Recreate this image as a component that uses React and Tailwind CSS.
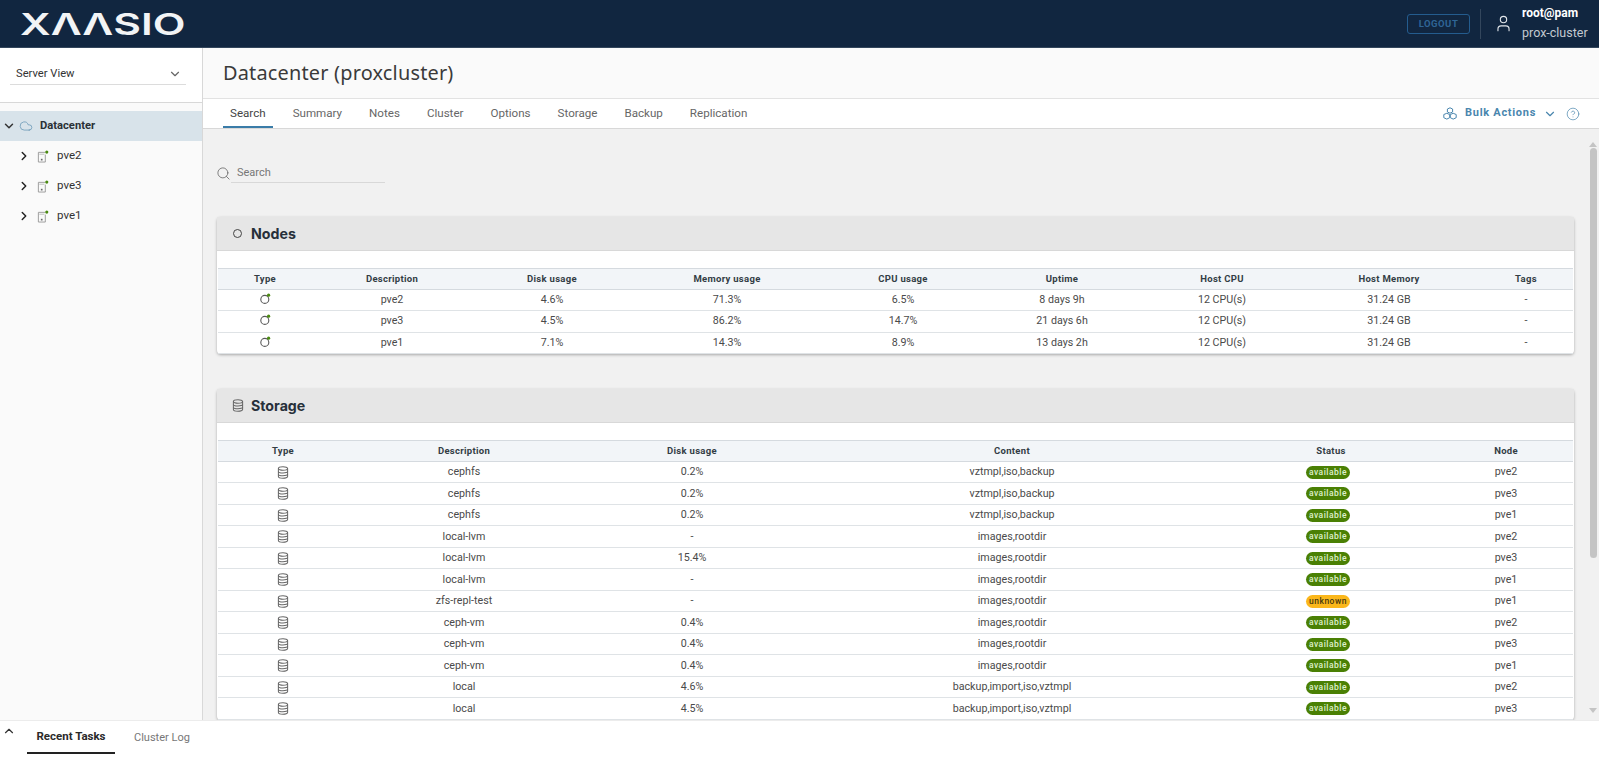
import React from "react";
import { ChevronDown, ChevronRight, ChevronUp, Search, User, CircleHelp, Cloud } from "lucide-react";

const nodeCols = "grid-cols-[94px_160px_160px_190px_162px_156px_164px_170px_96px]";
const storageCols = "grid-cols-[130px_232px_224px_416px_222px_128px]";

const nodes = [
  ["pve2", "4.6%", "71.3%", "6.5%", "8 days 9h", "12 CPU(s)", "31.24 GB", "-"],
  ["pve3", "4.5%", "86.2%", "14.7%", "21 days 6h", "12 CPU(s)", "31.24 GB", "-"],
  ["pve1", "7.1%", "14.3%", "8.9%", "13 days 2h", "12 CPU(s)", "31.24 GB", "-"],
];
const vz = "vztmpl,iso,backup";
const im = "images,rootdir";
const bk = "backup,import,iso,vztmpl";
const storage = [
  ["cephfs", "0.2%", vz, "available", "pve2"],
  ["cephfs", "0.2%", vz, "available", "pve3"],
  ["cephfs", "0.2%", vz, "available", "pve1"],
  ["local-lvm", "-", im, "available", "pve2"],
  ["local-lvm", "15.4%", im, "available", "pve3"],
  ["local-lvm", "-", im, "available", "pve1"],
  ["zfs-repl-test", "-", im, "unknown", "pve1"],
  ["ceph-vm", "0.4%", im, "available", "pve2"],
  ["ceph-vm", "0.4%", im, "available", "pve3"],
  ["ceph-vm", "0.4%", im, "available", "pve1"],
  ["local", "4.6%", bk, "available", "pve2"],
  ["local", "4.5%", bk, "available", "pve3"],
];
const tabs = ["Search", "Summary", "Notes", "Cluster", "Options", "Storage", "Backup", "Replication"];

function DbIcon({ className = "w-[12px] h-[13px]" }) {
  return (
    <svg viewBox="0 0 13 14" className={className} fill="none" stroke="#666" strokeWidth="1.1">
      <ellipse cx="6.5" cy="2.6" rx="5" ry="1.9" />
      <path d="M1.5 2.6v8.8c0 1 2.2 1.9 5 1.9s5-.9 5-1.9V2.6" />
      <path d="M1.5 5.8c0 1 2.2 1.7 5 1.7s5-.7 5-1.7M1.5 8.8c0 1 2.2 1.7 5 1.7s5-.7 5-1.7" />
    </svg>
  );
}
function NodeIcon() {
  return (
    <svg viewBox="0 0 13 13" className="w-[13px] h-[13px] -mt-[3px]" fill="none">
      <circle cx="5.8" cy="7.4" r="4" stroke="#5a5a5a" strokeWidth="1.1" />
      <circle cx="9.6" cy="3.2" r="1.6" fill="#4a8a10" />
    </svg>
  );
}
function HostIcon() {
  return (
    <svg viewBox="0 0 13 14" className="w-[12px] h-[13px]" fill="none">
      <path d="M9 2.5H1.5v10.5h7.5V5" stroke="#999" strokeWidth="1" />
      <rect x="2.5" y="4" width="5.5" height="1" fill="#bbb" />
      <rect x="4.2" y="9.5" width="1.8" height="1.8" fill="#666" />
      <circle cx="10.6" cy="2.2" r="1.7" fill="#4a8a10" />
    </svg>
  );
}
function BulkIcon() {
  return (
    <svg viewBox="0 0 14 13" className="w-[14px] h-[13px]" fill="none" stroke="#4a86ae" strokeWidth="1">
      <path d="M7 .8 9.6 2v3L7 6.2 4.4 5V2z" />
      <path d="M3.8 6.3 6.7 7.5v3.2l-2.9 1.4L.8 10.7V7.5z" />
      <path d="M10.2 6.3 13.2 7.5v3.2l-3 1.4-2.9-1.4V7.5z" />
    </svg>
  );
}
function Badge({ v }) {
  const c = v === "available" ? "bg-[#4a8004] text-[#dff0cc]" : "bg-[#fbb71b] text-[#4a3a10]";
  return (
    <span className={`${c} inline-flex items-center justify-center w-[44px] h-[13px] rounded-full text-[8.5px] leading-none font-medium tracking-[0.5px] relative -left-[3px]`}>
      {v}
    </span>
  );
}
function HeadCell({ children, className = "" }) {
  return <div className={`text-center text-[9.5px] font-bold tracking-[0.3px] text-[#333d45] ${className}`}>{children}</div>;
}
function Cell({ children, className = "" }) {
  return <div className={`flex items-center justify-center text-[10.7px] text-[#4a4a4a] ${className}`}>{children}</div>;
}
function Panel({ icon, title, cols, head, lastPad = "", children }) {
  return (
    <section className="rounded-sm bg-white shadow-[0_1px_3px_rgba(0,0,0,0.3)]">
      <div className="h-[34px] bg-[#e6e6e6] border-b border-[#d8d8d8] flex items-center pl-[14px] gap-[7px]">
        <div className="w-[13px] flex justify-center">{icon}</div>
        <h2 className="text-[14.2px] font-bold text-[#27303a] font-['Inter',sans-serif]">{title}</h2>
      </div>
      <div className="pt-[17px] pl-[1px] pr-[1px]">
        <div className={`grid ${cols} h-[22px] items-center bg-[#f2f5f8] border-t border-b border-[#d5dadf]`}>
          {head.map((h, i) => <HeadCell key={h} className={i === head.length - 1 ? lastPad : ""}>{h}</HeadCell>)}
        </div>
        {children}
      </div>
    </section>
  );
}

export default function App() {
  return (
    <div className="w-[1599px] h-[757px] flex flex-col overflow-hidden bg-white font-['Roboto',sans-serif]">
      <header className="h-[48px] shrink-0 bg-[#112640] border-b border-[#33465c] flex items-center pl-[20px]">
        <span className="inline-block origin-left scale-x-[1.42] text-[30px] leading-none font-semibold text-[#f2f4f6] font-['Inter',sans-serif]">XΛΛSIO</span>
        <div className="ml-auto flex items-center">
          <button className="w-[63px] h-[20px] rounded-[3px] border border-[#245c8e] text-[9.5px] pt-[1px] font-bold tracking-[0.5px] text-[#2f6596] flex items-center justify-center">LOGOUT</button>
          <div className="w-px h-[30px] bg-[#33465c] ml-[10px]" />
          <User className="w-[19px] h-[19px] text-[#e2e6ea] ml-[13px]" strokeWidth={1.4} />
          <div className="ml-[9px] w-[77px] flex flex-col -mt-[1px]">
            <span className="text-[12px] font-bold text-white leading-[20px]">root@pam</span>
            <span className="text-[12.5px] text-[#c3c9d0] leading-[20px]">prox-cluster</span>
          </div>
        </div>
      </header>

      <div className="flex-1 flex min-h-0">
        <aside className="w-[203px] shrink-0 bg-[#fafafa] border-r border-[#d8d8d8]">
          <div className="h-[55px] border-b border-[#d8d8d8] bg-white pt-[15px] pl-[10px]">
            <div className="w-[176px] h-[22px] border-b border-[#dcdcdc] flex items-center justify-between pl-[6px] pr-[4px] pt-[1px]">
              <span className="text-[11.2px] text-[#333]">Server View</span>
              <ChevronDown className="w-[14px] h-[14px] text-[#666]" />
            </div>
          </div>
          <div className="mt-[8px]">
            <div className="h-[30px] bg-[#d8e3ea] flex items-center pl-[2px]">
              <ChevronDown className="w-[14px] h-[14px] text-[#333]" strokeWidth={2.5} />
              <Cloud className="w-[14px] h-[14px] text-[#5b8fb0] ml-[3px]" strokeWidth={1.2} />
              <span className="ml-[7px] text-[11.2px] font-bold text-[#2a3036]">Datacenter</span>
            </div>
            {["pve2", "pve3", "pve1"].map((n) => (
              <div key={n} className="h-[30px] flex items-center pl-[17px]">
                <ChevronRight className="w-[14px] h-[14px] text-[#222]" strokeWidth={2.5} />
                <span className="ml-[6px]"><HostIcon /></span>
                <span className="ml-[8px] text-[11.5px] text-[#333]">{n}</span>
              </div>
            ))}
          </div>
        </aside>

        <main className="flex-1 min-w-0 flex flex-col">
          <div className="h-[51px] shrink-0 bg-[#fafafa] border-b border-[#e2e2e2] flex items-center pl-[20px]">
            <h1 className="text-[19.9px] text-[#3a3a3a] font-['Noto_Sans',sans-serif] tracking-[0.2px]">Datacenter (proxcluster)</h1>
          </div>
          <nav className="h-[30px] shrink-0 bg-white border-b border-[#d8d8d8] flex items-stretch pl-[20px] pr-[19px]">
            {tabs.map((t, i) => (
              <div key={t} className={`px-[7px] mr-[13px] pt-[3px] flex items-center text-[11.6px] border-b-2 ${i === 0 ? "border-[#3a7ca8] text-[#444]" : "border-transparent text-[#666]"}`}>{t}</div>
            ))}
            <div className="ml-auto flex items-center text-[#4a86ae]">
              <BulkIcon />
              <span className="ml-[8px] text-[11px] font-bold tracking-[0.7px]">Bulk Actions</span>
              <ChevronDown className="w-[14px] h-[14px] ml-[7px]" strokeWidth={2} />
              <CircleHelp className="w-[14px] h-[14px] ml-[9px]" strokeWidth={1.2} />
            </div>
          </nav>
          <div className="flex-1 min-h-0 flex bg-[#f1f1f1] overflow-hidden">
            <div className="w-[1385px] shrink-0 pl-[14px] pr-[14px] overflow-hidden">
              <div className="h-[88px] pt-[34px] flex items-start">
                <div className="flex items-center h-[20px]">
                  <Search className="w-[15px] h-[15px] text-[#666] -ml-[1px]" strokeWidth={1.3} />
                  <div className="w-[154px] h-[20px] border-b border-[#d8d8d8] pl-[6px] text-[11px] text-[#777] leading-[19px]">Search</div>
                </div>
              </div>
              <Panel icon={<span className="block w-[9px] h-[9px] rounded-full border border-[#444]" />} title="Nodes" cols={nodeCols} lastPad="pl-[8px]"
                head={["Type", "Description", "Disk usage", "Memory usage", "CPU usage", "Uptime", "Host CPU", "Host Memory", "Tags"]}>
                {nodes.map((r) => (
                  <div key={r[0]} className={`grid ${nodeCols} h-[21.33px] border-b border-[#dfe3e6]`}>
                    <Cell><NodeIcon /></Cell>
                    {r.map((c, i) => <Cell key={i} className={i === r.length - 1 ? "pl-[8px]" : ""}>{c}</Cell>)}
                  </div>
                ))}
              </Panel>
              <div className="h-[35px]" />
              <Panel icon={<DbIcon />} title="Storage" cols={storageCols}
                head={["Type", "Description", "Disk usage", "Content", "Status", "Node"]}>
                {storage.map((r, idx) => (
                  <div key={idx} className={`grid ${storageCols} h-[21.5px] border-b border-[#dfe3e6]`}>
                    <Cell><DbIcon /></Cell>
                    <Cell>{r[0]}</Cell>
                    <Cell>{r[1]}</Cell>
                    <Cell>{r[2]}</Cell>
                    <Cell><Badge v={r[3]} /></Cell>
                    <Cell>{r[4]}</Cell>
                  </div>
                ))}
              </Panel>
            </div>
            <div className="w-[11px] ml-auto mr-[1px] flex flex-col items-center pt-[13px] pb-[7px]">
              <span className="w-0 h-0 border-l-[4px] border-r-[4px] border-b-[5px] border-l-transparent border-r-transparent border-b-[#c4c4c4]" />
              <div className="w-[7px] h-[410px] rounded-[4px] bg-[#c4c4c4] mt-[1px]" />
              <span className="mt-auto w-0 h-0 border-l-[4px] border-r-[4px] border-t-[5px] border-l-transparent border-r-transparent border-t-[#c4c4c4]" />
            </div>
          </div>
        </main>
      </div>

      <footer className="h-[37px] shrink-0 bg-white border-t border-[#ececec] flex items-start pl-[2px]">
        <ChevronUp className="w-[14px] h-[14px] text-[#333] mt-[3px]" strokeWidth={2} />
        <div className="ml-[11px] w-[88px] h-[33px] border-b-2 border-[#222] flex items-center justify-center pt-[1px] text-[11.5px] font-bold text-[#2a2a2a]">Recent Tasks</div>
        <div className="ml-[19px] h-[33px] pt-[1px] flex items-center text-[11px] text-[#777]">Cluster Log</div>
      </footer>
    </div>
  );
}
